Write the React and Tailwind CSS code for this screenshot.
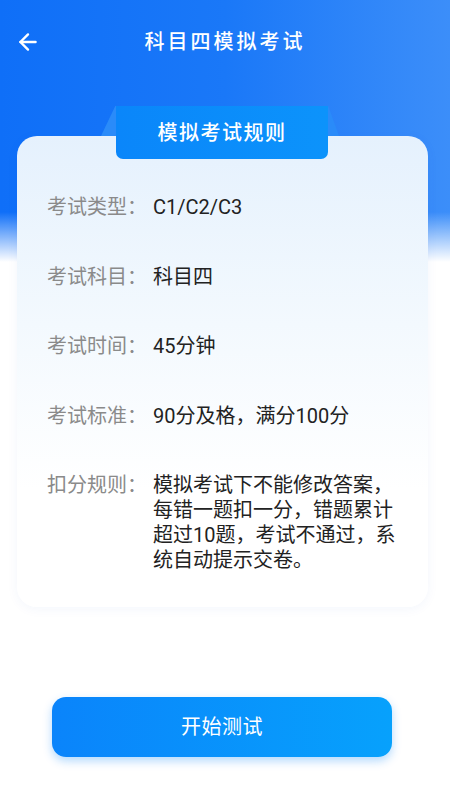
import React from "react";
import { ArrowLeft } from "lucide-react";

const rows = [
  { label: "考试类型：", value: "C1/C2/C3" },
  { label: "考试科目：", value: "科目四" },
  { label: "考试时间：", value: "45分钟" },
  { label: "考试标准：", value: "90分及格，满分100分" },
  {
    label: "扣分规则：",
    value: "模拟考试下不能修改答案，每错一题扣一分，错题累计超过10题，考试不通过，系统自动提示交卷。",
  },
];

export default function App() {
  return (
    <div
      className="w-[450px] h-[800px] overflow-hidden bg-white bg-[linear-gradient(to_bottom,rgba(255,255,255,0)_0px,rgba(255,255,255,0)_212px,#ffffff_262px),linear-gradient(to_right,#0f6ff8_0%,#1a78f8_50%,#3c8ef9_100%)] flex flex-col"
      style={{ fontFamily: 'Roboto, "Noto Sans CJK SC", "Noto Sans", sans-serif' }}
    >
      <div className="h-[84px] flex items-center relative shrink-0">
        <div className="pl-[15px] flex items-center text-white">
          <ArrowLeft size={26} strokeWidth={2.2} />
        </div>
        <div className="absolute left-0 right-0 text-center text-white text-[20px] font-medium tracking-[3px] pointer-events-none">
          科目四模拟考试
        </div>
      </div>

      <div className="ml-[17px] w-[411px] mt-[52px] relative rounded-[20px] bg-[linear-gradient(to_bottom,#e5f1fd_0%,#f3f9fe_40%,#ffffff_75%)] shadow-[0_2px_12px_rgba(0,80,200,0.05)] pt-[59px] pb-[34px] pl-[30px] pr-[26px] flex flex-col gap-[44.5px]">
        <div className="absolute left-[84px] top-[-30px] w-[238px] h-[30px] bg-[#2a8bf9] [clip-path:polygon(6%_0,95.5%_0,100%_100%,0_100%)]" />
        <div className="absolute left-[99px] top-[-30px] w-[212px] h-[53px] rounded-b-[7px] bg-[linear-gradient(to_right,#0a86fa,#0c93fb)] flex items-center justify-center text-white text-[20px] font-medium tracking-[1.5px]">
          模拟考试规则
        </div>

        {rows.map((r) => (
          <div key={r.label} className="flex items-start text-[20px] leading-[25px]">
            <div className="w-[106px] shrink-0 text-[#8a8a8a]">{r.label}</div>
            <div className="flex-1 text-[#222222]">{r.value}</div>
          </div>
        ))}
      </div>

      <button className="ml-[52px] mt-[90px] w-[340px] h-[60px] rounded-[14px] bg-[linear-gradient(to_right,#0a84fb,#07a1fc)] shadow-[0_4px_10px_rgba(0,130,250,0.3)] text-white text-[20px] tracking-[0.5px] flex items-center justify-center">
        开始测试
      </button>
    </div>
  );
}
